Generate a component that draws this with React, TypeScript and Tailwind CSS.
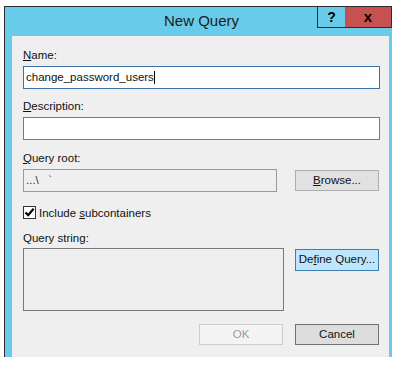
import React from 'react';

const font = { fontFamily: '"Liberation Sans", Arial, sans-serif' };

const U = ({ children }: { children: React.ReactNode }) => <span className="underline underline-offset-[1px]">{children}</span>;

export default function App() {
  return (
    <div className="w-[401px] h-[369px] bg-white pl-[4px] pt-[6px]" style={font}>
      <div className="w-[388px] h-[351px] border-l border-t border-[#2d2d2d] bg-[#69cbea] flex flex-col">
        {/* title bar */}
        <div className="h-[29px] grid grid-cols-[1fr_auto_1fr]">
          <div />
          <div className="pl-[6px] pt-[5px] text-[15px] leading-[18px] text-[#1b1b1b]">New Query</div>
          <div className="flex justify-end items-start">
            <div className="w-[28px] h-[21px] border-l border-b border-[#2d2d2d] flex items-center justify-center text-[14px] font-bold text-black">?</div>
            <div className="w-[47px] h-[21px] border-r border-b border-[#2d2d2d] bg-[#c75050] flex items-center justify-center text-[15px] font-bold text-black leading-none pb-[2px]">x</div>
          </div>
        </div>

        {/* body */}
        <div className="flex-1 pl-[7px] pr-[3px] flex">
          <div className="flex-1 bg-[#efefef] pt-[12px] pl-[11px] pr-[9px] text-[11.5px] text-[#111]">
            <div className="h-[14px] leading-[14px] mb-[4px]"><U>N</U>ame:</div>
            <div className="h-[23px] border border-[#3a72a6] bg-white flex items-center px-[2px]">
              change_password_users<span className="inline-block w-px h-[13px] bg-black" />
            </div>

            <div className="h-[14px] leading-[14px] mb-[4px] mt-[10px]"><U>D</U>escription:</div>
            <div className="h-[23px] border border-[#7a7a7a] bg-white" />

            <div className="h-[14px] leading-[14px] mb-[4px] mt-[11px]"><U>Q</U>uery root:</div>
            <div className="flex items-center">
              <div className="w-[254px] h-[23px] border border-[#9a9a9a] bg-[#efefef] flex items-center px-[2px] text-[#333] whitespace-pre">...\   `</div>
              <button className="ml-[18px] w-[84px] h-[21px] border border-[#adadad] bg-[#e1e1e1] leading-none"><U>B</U>rowse...</button>
            </div>

            <div className="mt-[14px] flex items-center h-[13px]">
              <div className="w-[13px] h-[13px] border border-[#333] bg-white flex items-center justify-center">
                <svg width="11" height="11" viewBox="0 0 11 11">
                  <path d="M1.5 5.5 L4.2 8.2 L9.6 1.8" stroke="#000" strokeWidth="2.2" fill="none" />
                </svg>
              </div>
              <span className="ml-[3px] leading-[14px]">Include <U>s</U>ubcontainers</span>
            </div>

            <div className="h-[14px] leading-[14px] mb-[3px] mt-[12px]">Query string:</div>
            <div className="flex items-start">
              <div className="w-[261px] h-[63px] border border-[#7a7a7a] bg-[#efefef]" />
              <button className="ml-[11px] mt-[1px] w-[84px] h-[22px] border border-[#3c7fb1] bg-[#bee6fd] leading-none">De<U>f</U>ine Query...</button>
            </div>

            <div className="mt-[13px] flex pl-[176px]">
              <button disabled className="w-[84px] h-[21px] border border-[#cdcdcd] bg-[#f4f4f4] text-[#9a9a9a] leading-none">OK</button>
              <button className="ml-[12px] w-[84px] h-[21px] border border-[#707070] bg-[#dddddd] leading-none">Cancel</button>
            </div>
          </div>
        </div>
      </div>
    </div>
  );
}
